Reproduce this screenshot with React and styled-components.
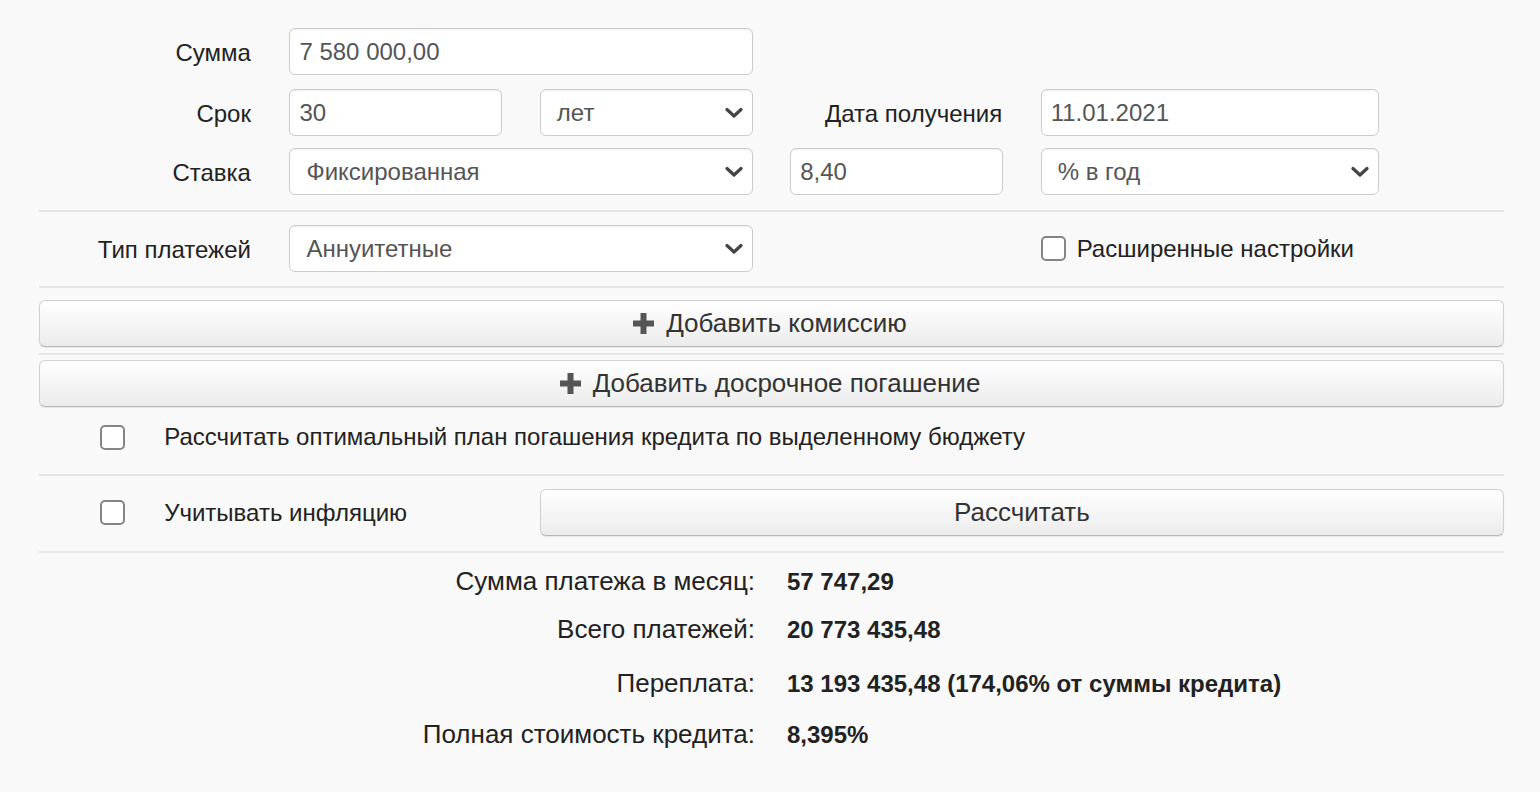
import React from 'react'
import styled, { createGlobalStyle } from 'styled-components'

const GlobalStyle = createGlobalStyle`
  body {
    margin: 0;
    background: #f9f9f9;
    font-family: "Liberation Sans", Arial, sans-serif;
    font-size: 24px;
    color: #333;
  }
`

const Chevron = () => (
  <svg width="18" height="12" viewBox="0 0 18 12">
    <path d="M2 2.5 L9 9 L16 2.5" fill="none" stroke="#444" strokeWidth="3.2" strokeLinecap="round" strokeLinejoin="round" />
  </svg>
)

const PlusIcon = () => (
  <svg width="23" height="23" viewBox="0 0 23 23">
    <path d="M11.5 1 V22 M1 11.5 H22" stroke="#555" strokeWidth="6" />
  </svg>
)

function App() {
  return (
    <>
      <GlobalStyle />
      <Form>
        <Row top={28}>
          <Label span={2}>Сумма</Label>
          <Field span={4}>
            <Input>7 580 000,00</Input>
          </Field>
        </Row>
        <Row top={14}>
          <Label span={2}>Срок</Label>
          <Field span={2}>
            <Input>30</Input>
          </Field>
          <Field span={2}>
            <Select>лет<Chevron /></Select>
          </Field>
          <Label span={2}>Дата получения</Label>
          <Field span={3}>
            <Input>11.01.2021</Input>
          </Field>
        </Row>
        <Row top={12}>
          <Label span={2}>Ставка</Label>
          <Field span={4}>
            <Select>Фиксированная<Chevron /></Select>
          </Field>
          <Field span={2}>
            <Input>8,40</Input>
          </Field>
          <Field span={3}>
            <Select>% в год<Chevron /></Select>
          </Field>
        </Row>
        <Divider top={15} />
        <Row top={13}>
          <Label span={2}>Тип платежей</Label>
          <Field span={4}>
            <Select>Аннуитетные<Chevron /></Select>
          </Field>
          <Field span={2} />
          <CheckField span={4}>
            <Checkbox />
            <span>Расширенные настройки</span>
          </CheckField>
        </Row>
        <Divider top={14} />
        <WideButton top={12}><PlusIcon />Добавить комиссию</WideButton>
        <Divider top={6} />
        <WideButton top={5}><PlusIcon />Добавить досрочное погашение</WideButton>
        <Row top={16}>
          <BoxCell span={1}><Checkbox /></BoxCell>
          <Text span={11}>Рассчитать оптимальный план погашения кредита по выделенному бюджету</Text>
        </Row>
        <Divider top={23} />
        <Row top={13}>
          <BoxCell span={1}><Checkbox /></BoxCell>
          <Text span={3}>Учитывать инфляцию</Text>
          <Field span={8}>
            <Button>Рассчитать</Button>
          </Field>
        </Row>
        <Divider top={15} />
        <Results>
          <ResultRow top={13}>
            <ResultLabel>Сумма платежа в месяц:</ResultLabel>
            <ResultValue>57 747,29</ResultValue>
          </ResultRow>
          <ResultRow top={17}>
            <ResultLabel>Всего платежей:</ResultLabel>
            <ResultValue>20 773 435,48</ResultValue>
          </ResultRow>
          <ResultRow top={23}>
            <ResultLabel>Переплата:</ResultLabel>
            <ResultValue>13 193 435,48 (174,06% от суммы кредита)</ResultValue>
          </ResultRow>
          <ResultRow top={20}>
            <ResultLabel>Полная стоимость кредита:</ResultLabel>
            <ResultValue>8,395%</ResultValue>
          </ResultRow>
        </Results>
      </Form>
    </>
  )
}

const Form = styled.div`
  width: 1465px;
  margin-left: 39px;
  padding-bottom: 40px;
`

const Row = styled.div`
  display: grid;
  grid-template-columns: repeat(12, 1fr);
  column-gap: 37.5px;
  align-items: center;
  margin-top: ${p => p.top || 0}px;
`

const Label = styled.div`
  grid-column: span ${p => p.span};
  text-align: right;
  color: #222;
  padding-right: 1px;
  padding-top: 2px;
`

const Field = styled.div`
  grid-column: span ${p => p.span};
`

const Text = styled.div`
  grid-column: span ${p => p.span};
  color: #222;
`

const BoxCell = styled.div`
  grid-column: span ${p => p.span};
  display: flex;
  justify-content: flex-end;
  padding-right: 2px;
`

const CheckField = styled.div`
  grid-column: span ${p => p.span};
  display: flex;
  align-items: center;
  gap: 11px;
  color: #222;
`

const Input = styled.div`
  box-sizing: border-box;
  height: 47px;
  display: flex;
  align-items: center;
  padding: 0 9px;
  background: #fff;
  border: 1px solid #ccc;
  border-radius: 6px;
  box-shadow: inset 0 1px 1px rgba(0, 0, 0, 0.06);
  color: #555;
`

const Select = styled(Input)`
  justify-content: space-between;
  padding: 0 9px 0 16px;
`

const Checkbox = styled.span`
  box-sizing: border-box;
  width: 25px;
  height: 25px;
  border: 2px solid #858585;
  border-radius: 5px;
  background: #fff;
  flex-shrink: 0;
`

const Divider = styled.div`
  height: 2px;
  background: #e6e6e6;
  margin-top: ${p => p.top || 0}px;
`

const Button = styled.div`
  box-sizing: border-box;
  height: 47px;
  display: flex;
  align-items: center;
  justify-content: center;
  gap: 11px;
  border: 1px solid #d0d0d0;
  border-bottom-color: #b8b8b8;
  border-radius: 6px;
  background: linear-gradient(to bottom, #ffffff 0%, #ececec 100%);
  box-shadow: 0 1px 1px rgba(0, 0, 0, 0.08);
  color: #333;
  font-size: 26px;
`

const WideButton = styled(Button)`
  margin-top: ${p => p.top || 0}px;
  padding-right: 4px;
  svg {
    margin-top: -1px;
  }
`

const Results = styled.div`
  display: flex;
  flex-direction: column;
`

const ResultRow = styled.div`
  display: grid;
  grid-template-columns: 716px 1fr;
  column-gap: 32px;
  align-items: center;
  margin-top: ${p => p.top || 0}px;
`

const ResultLabel = styled.div`
  text-align: right;
  color: #222;
  font-size: 26px;
`

const ResultValue = styled.div`
  font-weight: bold;
  color: #222;
`

export default App
